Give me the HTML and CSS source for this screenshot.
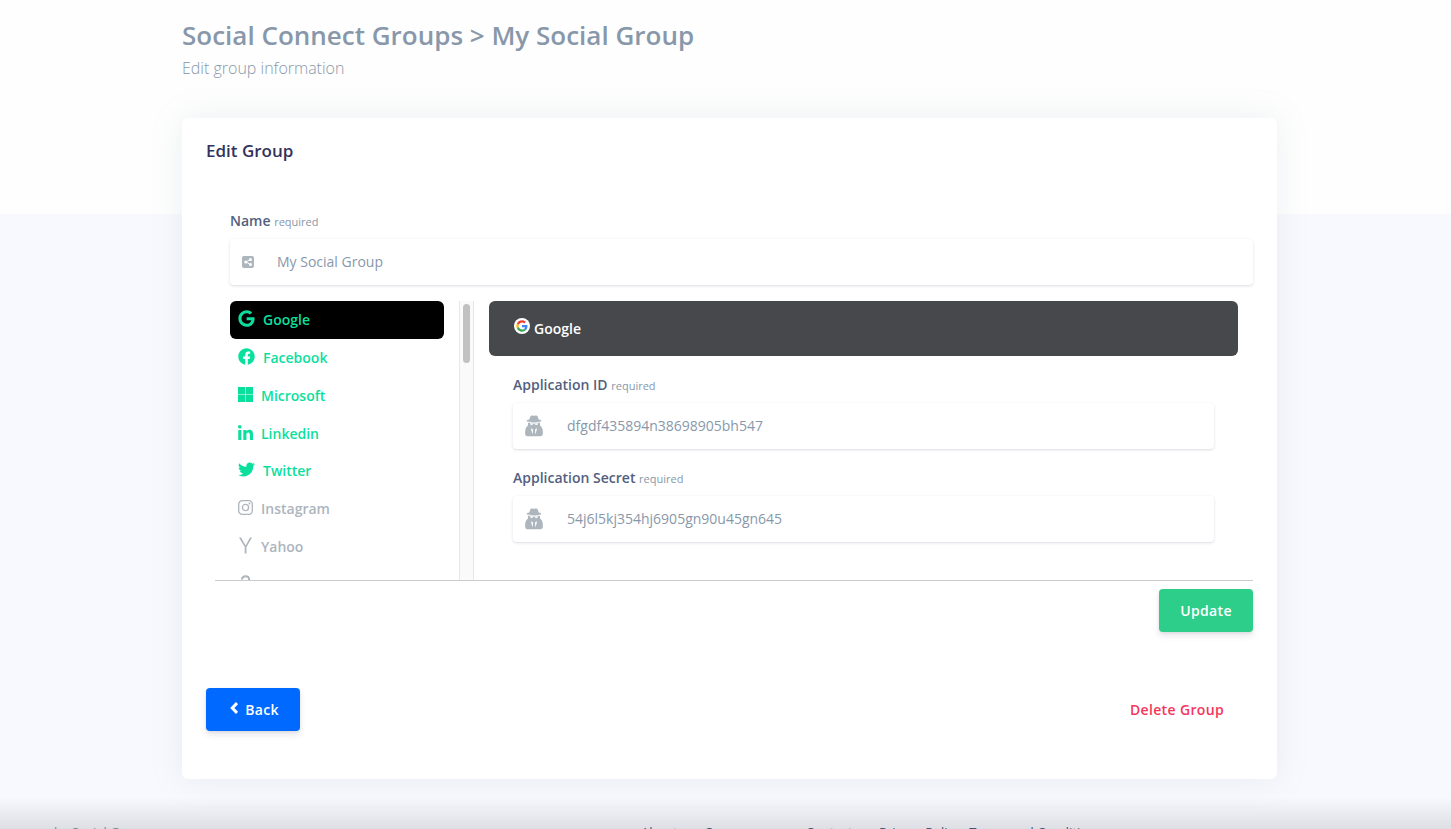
FILE: index.html
```html
<!DOCTYPE html>
<html lang="en">
<head>
<meta charset="utf-8">
<title>Social Connect Groups</title>
<meta name="viewport" content="width=device-width, initial-scale=1">
<link rel="stylesheet" href="styles.css">
</head>
<body>
<svg class="sprite" aria-hidden="true">
  <symbol id="spy" viewBox="0 0 18 22">
    <path d="M4.300 4.600 5.300 1.600C5.800.4 7 .3 9 1c2-.7 3.200-.6 3.700.6l1 3c1.600.3 2.600.8 2.600 1.400S13 7.200 9 7.200 1.700 6.600 1.700 6s1-1.100 2.600-1.400z"/>
    <path d="M3 7.700h12v2.600l1 1.200c1.200 1 1.900 3 1.900 6.500 0 2.200-.9 3.300-2.500 3.300H2.600c-1.600 0-2.500-1.100-2.500-3.300 0-3.500.7-5.500 1.900-6.500l1-1.200z"/>
    <path fill="#fff" d="M4.800 8.300h3.500l.7.300.7-.3h3.500l-.5 1.100c-1 .8-2.400.6-3-.5h-1.400c-.6 1.100-2 1.300-3 .5zM5.800 13.200l2.300 1.200-.5 5zM12.200 13.200l-2.300 1.200.5 5z"/>
  </symbol>
</svg>
<main class="page">
  <header class="page-header">
    <h1 class="page-title">Social Connect Groups &gt; My Social Group</h1>
    <p class="page-subtitle">Edit group information</p>
  </header>
  <section class="card">
    <h2 class="card-title">Edit Group</h2>
    <form class="group-form">
      <div class="field">
        <label class="label" for="name">Name <small class="hint">required</small></label>
        <div class="input-box">
          <svg class="icon-share" viewBox="0 0 12 12"><rect width="12" height="12" rx="2"/><path fill="none" stroke="#fff" d="M8.500 3.500 3.800 6l4.700 2.500"/><g fill="#fff"><circle cx="8.500" cy="3.500" r="1.500"/><circle cx="3.700" cy="6" r="1.500"/><circle cx="8.500" cy="8.500" r="1.500"/></g></svg>
          <input class="input" id="name" type="text" value="My Social Group">
        </div>
      </div>
      <div class="networks">
        <nav class="network-list" aria-label="Networks">
          <button type="button" class="network network-on network-current"><svg class="icon icon-wide" viewBox="0 0 488 512"><path d="M488 261.800C488 403.300 391.100 504 248 504 110.800 504 0 393.200 0 256S110.800 8 248 8c66.800 0 123 24.500 166.300 64.900l-67.500 64.900C258.500 52.600 94.300 116.600 94.300 256c0 86.500 69.100 156.600 153.700 156.600 98.200 0 135-70.400 140.800-106.900H248v-85.300h236.100c2.300 12.700 3.900 24.900 3.900 41.400z"/></svg>Google</button>
          <button type="button" class="network network-on"><svg class="icon icon-wide" viewBox="0 0 512 512"><path d="M504 256C504 119 393 8 256 8S8 119 8 256c0 123.780 90.690 226.380 209.250 245V327.690h-63V256h63v-54.640c0-62.150 37-96.480 93.670-96.480 27.140 0 55.520 4.840 55.520 4.840v61h-31.280c-30.800 0-40.410 19.120-40.410 38.730V256h68.780l-11 71.690h-57.780V501C413.310 482.380 504 379.780 504 256z"/></svg>Facebook</button>
          <button type="button" class="network network-on"><svg class="icon" viewBox="0 0 15 15"><path d="M0 0h7.200v7.200H0zM7.800 0H15v7.200H7.800zM0 7.800h7.200V15H0zM7.800 7.800H15V15H7.800z"/></svg>Microsoft</button>
          <button type="button" class="network network-on"><svg class="icon" viewBox="0 0 448 448"><path d="M100.280 448H7.400V148.900h92.880zM53.790 108.100C24.090 108.100 0 83.500 0 53.800a53.790 53.790 0 0 1 107.580 0c0 29.700-24.100 54.300-53.790 54.300zM447.900 448h-92.680V302.400c0-34.700-.7-79.200-48.290-79.200-48.290 0-55.690 37.700-55.690 76.700V448h-92.780V148.900h89.080v40.800h1.300c12.400-23.500 42.690-48.300 87.880-48.300 94 0 111.280 61.900 111.280 142.300V448z"/></svg>Linkedin</button>
          <button type="button" class="network network-on"><svg class="icon icon-wide" viewBox="0 0 512 512"><path d="M459.370 151.716c.325 4.548.325 9.097.325 13.645 0 138.720-105.583 298.558-298.558 298.558-59.452 0-114.680-17.219-161.137-47.106 8.447.974 16.568 1.299 25.340 1.299 49.055 0 94.213-16.568 130.274-44.832-46.132-.975-84.792-31.188-98.112-72.772 6.498.974 12.995 1.624 19.818 1.624 9.421 0 18.843-1.300 27.614-3.573-48.081-9.747-84.143-51.980-84.143-102.985v-1.299c13.969 7.797 30.214 12.670 47.431 13.319-28.264-18.843-46.781-51.005-46.781-87.391 0-19.492 5.197-37.360 14.294-52.954 51.655 63.675 129.300 105.258 216.365 109.807-1.624-7.797-2.599-15.918-2.599-24.040 0-57.828 46.782-104.934 104.934-104.934 30.213 0 57.502 12.670 76.670 33.137 23.715-4.548 46.456-13.320 66.599-25.340-7.798 24.366-24.366 44.833-46.132 57.827 21.117-2.273 41.584-8.122 60.426-16.243-14.292 20.791-32.161 39.308-52.628 54.253z"/></svg>Twitter</button>
          <button type="button" class="network"><svg class="icon" viewBox="0 0 15 15"><g fill="none" stroke="currentColor" stroke-width="1.300"><rect x=".7" y=".7" width="13.600" height="13.600" rx="3.600"/><circle cx="7.500" cy="7.500" r="3.100"/></g><circle cx="11.500" cy="3.500" r=".9"/></svg>Instagram</button>
          <button type="button" class="network"><svg class="icon" viewBox="0 0 15 17"><path d="M1 .5h2.100l4.500 7.900 4.400-7.900h2L8.500 9.900v6.600H6.700V9.900z"/></svg>Yahoo</button>
          <button type="button" class="network"><svg class="icon" viewBox="0 0 15 17"><path fill="none" stroke="currentColor" stroke-width="2" d="M3.800 4.500C4.200 2.300 5.500 1.200 7.500 1.200c2.400 0 3.600 1.200 3.600 3.300V9c0 1 .3 1.700 1 2.300M11 6C7 6 4 6.500 4 9.300c0 3 5 3 7-.6M1 13.500c4 2.600 9 2.600 13 0"/></svg>Amazon</button>
        </nav>
        <div class="scroll-track" aria-hidden="true"><div class="scroll-thumb"></div></div>
        <section class="network-panel">
          <h3 class="panel-title"><svg class="icon-badge" viewBox="0 0 48 48"><circle cx="24" cy="24" r="24" fill="#fff"/><g transform="translate(7 7) scale(.71)"><path fill="#ea4335" d="M24 9.500c3.540 0 6.710 1.220 9.210 3.600l6.850-6.850C35.900 2.380 30.470 0 24 0 14.620 0 6.510 5.380 2.560 13.220l7.980 6.190C12.430 13.720 17.740 9.500 24 9.500z"/><path fill="#4285f4" d="M46.980 24.550c0-1.570-.15-3.090-.38-4.550H24v9.020h12.940c-.58 2.960-2.260 5.480-4.780 7.180l7.730 6c4.510-4.180 7.090-10.360 7.090-17.650z"/><path fill="#fbbc05" d="M10.530 28.590c-.48-1.450-.76-2.990-.76-4.590s.27-3.140.76-4.590l-7.980-6.190C.92 16.460 0 20.120 0 24c0 3.880.92 7.540 2.560 10.780l7.970-6.190z"/><path fill="#34a853" d="M24 48c6.480 0 11.930-2.130 15.890-5.810l-7.730-6c-2.150 1.450-4.920 2.300-8.160 2.300-6.260 0-11.570-4.220-13.470-9.910l-7.980 6.190C6.510 42.620 14.620 48 24 48z"/></g></svg>Google</h3>
          <div class="panel-fields">
            <div class="field">
              <label class="label" for="app-id">Application ID <small class="hint">required</small></label>
              <div class="input-box"><svg class="icon-spy"><use href="#spy"/></svg><input class="input" id="app-id" type="text" value="dfgdf435894n38698905bh547"></div>
            </div>
            <div class="field">
              <label class="label" for="app-secret">Application Secret <small class="hint">required</small></label>
              <div class="input-box"><svg class="icon-spy"><use href="#spy"/></svg><input class="input" id="app-secret" type="text" value="54j6l5kj354hj6905gn90u45gn645"></div>
            </div>
          </div>
        </section>
      </div>
      <div class="form-actions"><button type="submit" class="btn btn-green">Update</button></div>
    </form>
    <div class="card-actions">
      <a class="btn btn-blue" href="#"><svg class="icon-back" viewBox="0 0 8 12"><path fill="none" stroke="currentColor" stroke-width="3" d="M7 1 2.300 6 7 11"/></svg>Back</a>
      <button type="button" class="btn btn-link">Delete Group</button>
    </div>
  </section>
</main>
<footer class="footer">
  <span>by Social Group</span>
  <nav class="footer-links"><a href="#">About us</a><a href="#">Company news</a><a href="#">Contact us</a><a href="#">Privacy Policy</a><a href="#">Terms and Conditions</a></nav>
</footer>
<div class="bottom-shade"></div>
</body>
</html>
```
FILE: styles.css
```css
* { box-sizing: border-box; }
html { scrollbar-width: none; }
body {
  margin: 0;
  font-family: "Open Sans", sans-serif;
  font-size: 14px;
  line-height: 20px;
  color: #8898aa;
  background: linear-gradient(#fefefe 214px, #f8f9fe 214px);
}
h1, h2, h3, p { margin: 0; }
button, input { font: inherit; }
.sprite { display: none; }
svg { fill: currentColor; flex: none; }

.page { padding: 16px 174px 0 182px; }
.page-header { padding-bottom: 37px; }
.page-title { font-size: 26px; line-height: 39px; font-weight: 600; }
.page-subtitle { font-size: 16px; line-height: 26px; font-weight: 300; }

.card {
  padding: 20px 24px 48px;
  background: #fff;
  border-radius: 6px;
  box-shadow: 0 0 32px rgba(136, 152, 170, .15);
}
.card-title { font-size: 17px; line-height: 26px; font-weight: 600; color: #32325d; }
.group-form { padding: 47px 0 56px 24px; }

.label { display: block; padding-bottom: 7px; font-weight: 600; color: #525f7f; }
.hint { font-size: 11px; font-weight: 400; color: #8898aa; }
.input-box {
  display: flex;
  align-items: center;
  height: 46px;
  padding-left: 12px;
  color: #adb5bd;
  border-radius: 4px;
  background: #fff;
  box-shadow: 0 1px 3px rgba(50, 50, 93, .15), 0 1px 0 rgba(0, 0, 0, .02);
}
.input {
  flex: 1;
  min-width: 0;
  height: 100%;
  padding: 0 12px 2px;
  border: 0;
  outline: 0;
  background: none;
  color: #8898aa;
}
.icon-share { width: 12px; height: 12px; margin-right: 11px; }
.icon-spy { width: 18px; height: 22px; margin-right: 12px; }

.networks {
  display: flex;
  height: 280px;
  margin: 16px 0 0 -15px;
  padding-left: 15px;
  overflow: hidden;
  border-bottom: 1px solid #ccc;
}
.network-list {
  display: flex;
  flex: 0 0 214px;
  flex-direction: column;
  height: 303px;
  margin-right: 15px;
}
.network {
  display: flex;
  flex: 1;
  align-items: center;
  gap: 8px;
  width: 100%;
  padding: 0 8px;
  border: 0;
  border-radius: 6px;
  background: none;
  color: #adb5bd;
  font-weight: 600;
  text-align: left;
}
.network-on { color: #0bdf9d; }
.network-current { background: #000; }
.icon { width: 15px; height: 17px; margin-bottom: 3px; }
.icon-wide { width: 17px; }
.scroll-track {
  flex: 0 0 15px;
  padding: 3px;
  border: solid #e8e8e8;
  border-width: 0 1px;
  background: #fafafa;
}
.scroll-thumb { height: 59px; border-radius: 4px; background: #c1c1c1; }
.network-panel { flex: 1; min-width: 0; margin: 0 15px; }
.panel-title {
  display: flex;
  align-items: center;
  gap: 4px;
  height: 55px;
  padding-left: 25px;
  border-radius: 6px;
  background: #47484b;
  color: #fff;
  font-size: 14px;
  font-weight: 600;
}
.icon-badge { width: 16px; height: 16px; margin-bottom: 5px; }
.panel-fields { display: grid; gap: 19px; padding: 19px 24px 0; }

.form-actions { display: flex; justify-content: flex-end; padding-top: 8px; }
.card-actions { display: flex; justify-content: space-between; }
.btn {
  display: flex;
  align-items: center;
  justify-content: center;
  gap: 7px;
  min-width: 94px;
  height: 43px;
  padding: 0 20px;
  border: 0;
  border-radius: 4px;
  color: #fff;
  font-weight: 600;
  letter-spacing: .025em;
  text-decoration: none;
  box-shadow: 0 4px 6px rgba(50, 50, 93, .11), 0 1px 3px rgba(0, 0, 0, .08);
}
.btn-green { background: #2dce89; }
.btn-blue { padding-left: 23px; background: #0069ff; }
.btn-link { padding: 0 29px; background: none; color: #f5365c; box-shadow: none; }
.icon-back { width: 8px; height: 12px; margin-bottom: 3px; }

.footer { display: flex; padding: 43px 54px 24px; font-size: 13px; }
.footer span { flex: 0 0 587px; }
.footer-links { display: flex; gap: 9px; }
.footer-links a { color: #525f7f; text-decoration: none; }
.bottom-shade {
  position: fixed;
  inset: auto 0 0;
  height: 32px;
  background: linear-gradient(rgba(0, 0, 0, 0), rgba(0, 0, 0, .1));
  pointer-events: none;
}
```
